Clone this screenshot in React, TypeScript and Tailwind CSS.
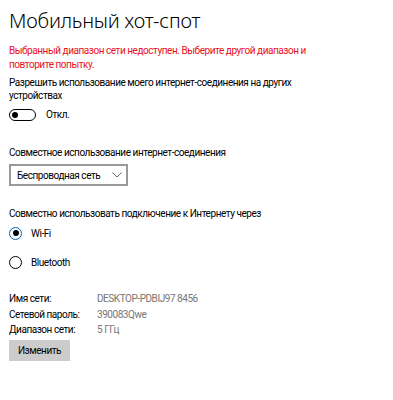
import React from "react";

export default function App() {
  const font = { fontFamily: 'Roboto, "Noto Sans", sans-serif' };
  const t = "text-[10px] tracking-[-0.45px]";
  return (
    <div className="w-[393px] h-[400px] bg-white text-black overflow-hidden" style={font}>
      <div className="pl-[9px] flex flex-col">
        <div className="mt-[7px] h-[28px] leading-[28px] text-[20px] font-light tracking-[-0.2px] whitespace-nowrap" style={{ fontFamily: '"Noto Sans", sans-serif' }}>Мобильный хот-спот</div>
        <div className={`mt-[9px] ${t} leading-[13.5px] text-[#e81123] whitespace-nowrap`}>
          Выбранный диапазон сети недоступен. Выберите другой диапазон и
          <br />
          повторите попытку.
        </div>
        <div className={`mt-[5px] ${t} leading-[13px] whitespace-nowrap`}>
          Разрешить использование моего интернет-соединения на других
          <br />
          устройствах
        </div>
        <div className="mt-[6px] flex items-center h-[13px]">
          <div className="w-[27px] h-[12px] rounded-full border-[1.5px] border-black flex items-center pl-[2px]">
            <div className="w-[6px] h-[6px] rounded-full bg-black" />
          </div>
          <span className={`ml-[10px] ${t}`}>Откл.</span>
        </div>
        <div className={`mt-[25px] ${t} leading-[13px] whitespace-nowrap`}>Совместное использование интернет-соединения</div>
        <div className="mt-[5px] w-[119px] h-[22px] border-2 border-[#999999] flex items-center justify-between pl-[6px] pr-[4px]">
          <span className={`${t} whitespace-nowrap`}>Беспроводная сеть</span>
          <svg width="10" height="6" viewBox="0 0 10 6" fill="none">
            <path d="M0.5 0.5 L5 5 L9.5 0.5" stroke="#666" strokeWidth="1" />
          </svg>
        </div>
        <div className={`mt-[21px] ${t} leading-[13px] whitespace-nowrap`}>Совместно использовать подключение к Интернету через</div>
        <div className="mt-[3px] flex items-center h-[20px]">
          <div className="w-[13px] h-[13px] rounded-full border-[1.5px] border-[#0063b1] flex items-center justify-center">
            <div className="w-[6px] h-[6px] rounded-full bg-black" />
          </div>
          <span className={`ml-[9px] ${t}`}>Wi-Fi</span>
        </div>
        <div className="mt-[9px] flex items-center h-[20px]">
          <div className="w-[13px] h-[13px] rounded-full border-[1.5px] border-black" />
          <span className={`ml-[9px] ${t}`}>Bluetooth</span>
        </div>
        <div className={`mt-[19px] flex flex-col ${t}`}>
          <div className="flex h-[15.5px] items-center">
            <span className="w-[88px] whitespace-nowrap">Имя сети:</span>
            <span className="text-[#767676] whitespace-nowrap">DESKTOP-PDBIJ97 8456</span>
          </div>
          <div className="flex h-[15.5px] items-center">
            <span className="w-[88px] whitespace-nowrap">Сетевой пароль:</span>
            <span className="text-[#767676]">390083Qwe</span>
          </div>
          <div className="flex h-[15.5px] items-center">
            <span className="w-[88px] whitespace-nowrap">Диапазон сети:</span>
            <span className="text-[#767676]">5 ГГц</span>
          </div>
        </div>
        <div className={`mt-[2.5px] w-[61px] h-[21px] bg-[#cccccc] flex items-center justify-center ${t}`}>Изменить</div>
      </div>
    </div>
  );
}
